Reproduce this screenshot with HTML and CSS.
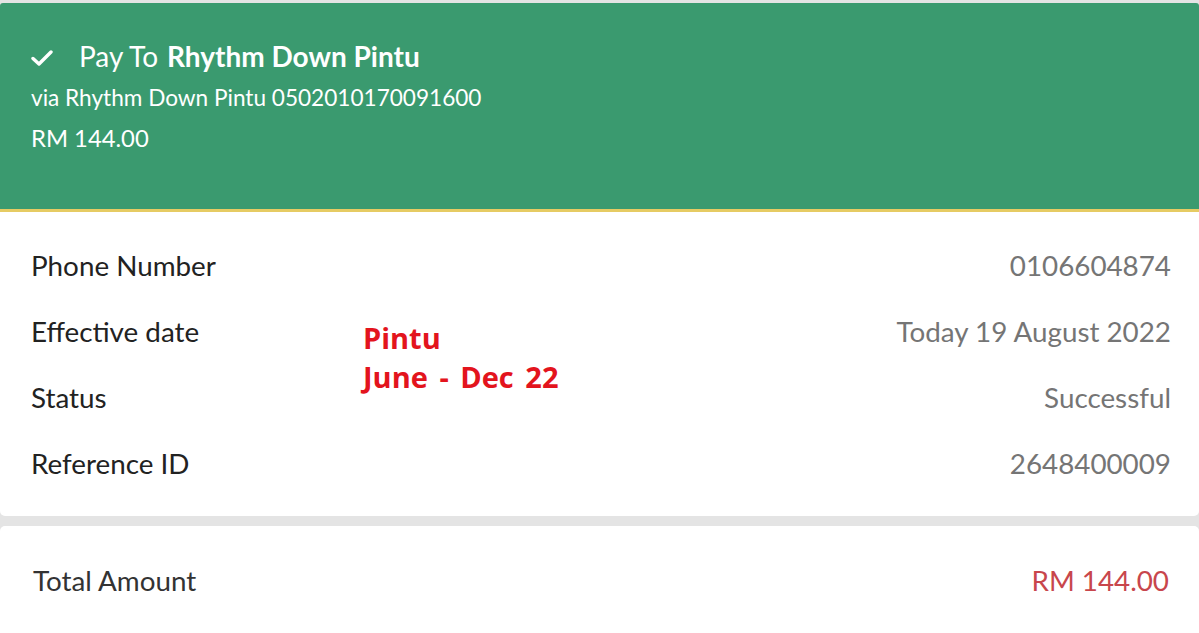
FILE: index.html
```html
<!DOCTYPE html>
<html>
<head>
<meta charset="utf-8">
<link rel="stylesheet" href="styles.css">
</head>
<body>
<div class="page">
  <section class="header">
    <div class="title">
      <svg class="check" width="22" height="18" viewBox="0 0 22 18"><path d="M2 9.5 L8 15 L20 3" fill="none" stroke="#fff" stroke-width="3.4" stroke-linecap="round" stroke-linejoin="round"/></svg>
      <span class="pay">Pay To</span>
      <strong class="name">Rhythm Down Pintu</strong>
    </div>
    <div class="sub">via Rhythm Down Pintu 0502010170091600</div>
    <div class="sub amount">RM 144.00</div>
  </section>
  <section class="card details">
    <div class="row"><span class="label">Phone Number</span><span class="value">0106604874</span></div>
    <div class="row"><span class="label">Effective date</span><span class="value">Today 19 August 2022</span></div>
    <div class="row"><span class="label">Status</span><span class="value">Successful</span></div>
    <div class="row"><span class="label">Reference ID</span><span class="value">2648400009</span></div>
    <div class="note">Pintu<br>June - Dec 22</div>
  </section>
  <section class="card total">
    <div class="row"><span class="label tlabel">Total Amount</span><span class="value tvalue">RM 144.00</span></div>
  </section>
</div>
</body>
</html>
```
FILE: styles.css
```css
html, body {
  margin: 0;
  padding: 0;
  background: #e4e4e4;
  font-family: Lato, "Open Sans", sans-serif;
  overflow: hidden;
}
.page {
  padding-top: 3px;
  display: flex;
  flex-direction: column;
  height: 630px;
}
.header {
  background: #3a9a6f;
  border-bottom: 3px solid #e6cb63;
  padding: 35px 31px 51px;
  color: #fff;
  border-radius: 3px 3px 0 0;
}
.title {
  display: flex;
  align-items: center;
  height: 36px;
  font-size: 28px;
}
.check {
  margin-right: 26px;
  margin-top: 4px;
}
.pay {
  margin-right: 9px;
}
.name {
  font-weight: 700;
}
.sub {
  font-size: 22.6px;
  line-height: 40px;
}
.amount {
  font-size: 23.8px;
}
.title + .sub {
  margin-top: 4px;
}
.card {
  background: #fff;
  position: relative;
}
.details {
  padding: 20px 28px 20px 31px;
  border-radius: 0 0 5px 5px;
}
.row {
  display: flex;
  justify-content: space-between;
  align-items: center;
  height: 66px;
  font-size: 27.8px;
}
.label {
  color: #222;
}
.value {
  color: #757575;
}
.total {
  margin-top: 10px;
  padding: 21px 30px 20px 33px;
  border-radius: 5px 5px 0 0;
  flex: 1;
}
.tlabel {
  color: #333;
}
.tvalue {
  color: #c8464c;
}
.note {
  position: absolute;
  left: 363px;
  top: 106px;
  color: #e3141d;
  font-family: "Open Sans", sans-serif;
  font-weight: 700;
  font-size: 29px;
  line-height: 39px;
  word-spacing: 4px;
}
```
